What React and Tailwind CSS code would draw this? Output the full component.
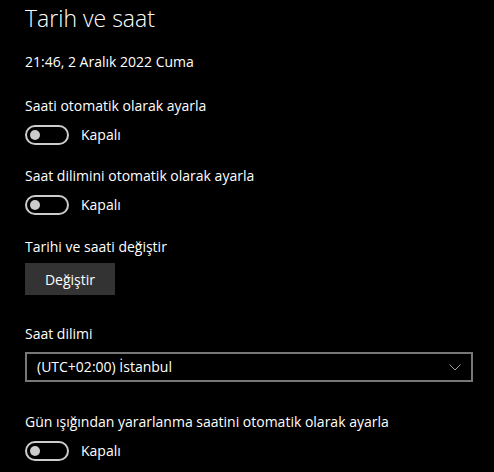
import React from "react";

const Toggle = ({ className = "" }) => (
  <div className={`flex items-center h-[20px] ${className}`}>
    <div className="w-[44px] h-[20px] rounded-full border-2 border-[#cccccc] flex items-center pl-[3px]">
      <div className="w-[10px] h-[10px] rounded-full bg-[#cccccc]" />
    </div>
    <span className="ml-[12px] text-[14px] leading-[20px]">Kapalı</span>
  </div>
);

const App = () => {
  return (
    <div
      className="w-[494px] h-[472px] bg-black text-white px-[25px] pt-[2px] overflow-hidden"
      style={{ fontFamily: '"Open Sans", "Noto Sans", sans-serif' }}
    >
      <h1 className="text-[23px] leading-[32px] font-light">Tarih ve saat</h1>

      <div className="mt-[18px] text-[14px] leading-[20px]">21:46, 2 Aralık 2022 Cuma</div>

      {/* otomatik saat */}
      <div className="mt-[24px] text-[14px] leading-[20px]">Saati otomatik olarak ayarla</div>
      <Toggle className="mt-[9px]" />

      <div className="mt-[21px] text-[14px] leading-[20px]">Saat dilimini otomatik olarak ayarla</div>
      <Toggle className="mt-[9px]" />

      {/* değiştir */}
      <div className="mt-[22px] text-[14px] leading-[20px]">Tarihi ve saati değiştir</div>
      <button
        type="button"
        className="mt-[6px] w-[90px] h-[32px] bg-[#333333] text-[14px] text-white flex items-center justify-center"
      >
        Değiştir
      </button>

      {/* saat dilimi */}
      <div className="mt-[29px] text-[14px] leading-[20px]">Saat dilimi</div>
      <div className="mt-[8px] w-[448px] h-[30px] border-2 border-[#777777] flex items-center justify-between pl-[10px] pr-[10px]">
        <span className="text-[14px] leading-[20px]">(UTC+02:00) İstanbul</span>
        <svg width="12" height="7" viewBox="0 0 12 7" fill="none">
          <path d="M0.5 0.5 L6 6 L11.5 0.5" stroke="#a0a0a0" strokeWidth="1" />
        </svg>
      </div>

      <div className="mt-[30px] text-[14px] leading-[20px]">
        Gün ışığından yararlanma saatini otomatik olarak ayarla
      </div>
      <Toggle className="mt-[9px]" />
    </div>
  );
};

export default App;
